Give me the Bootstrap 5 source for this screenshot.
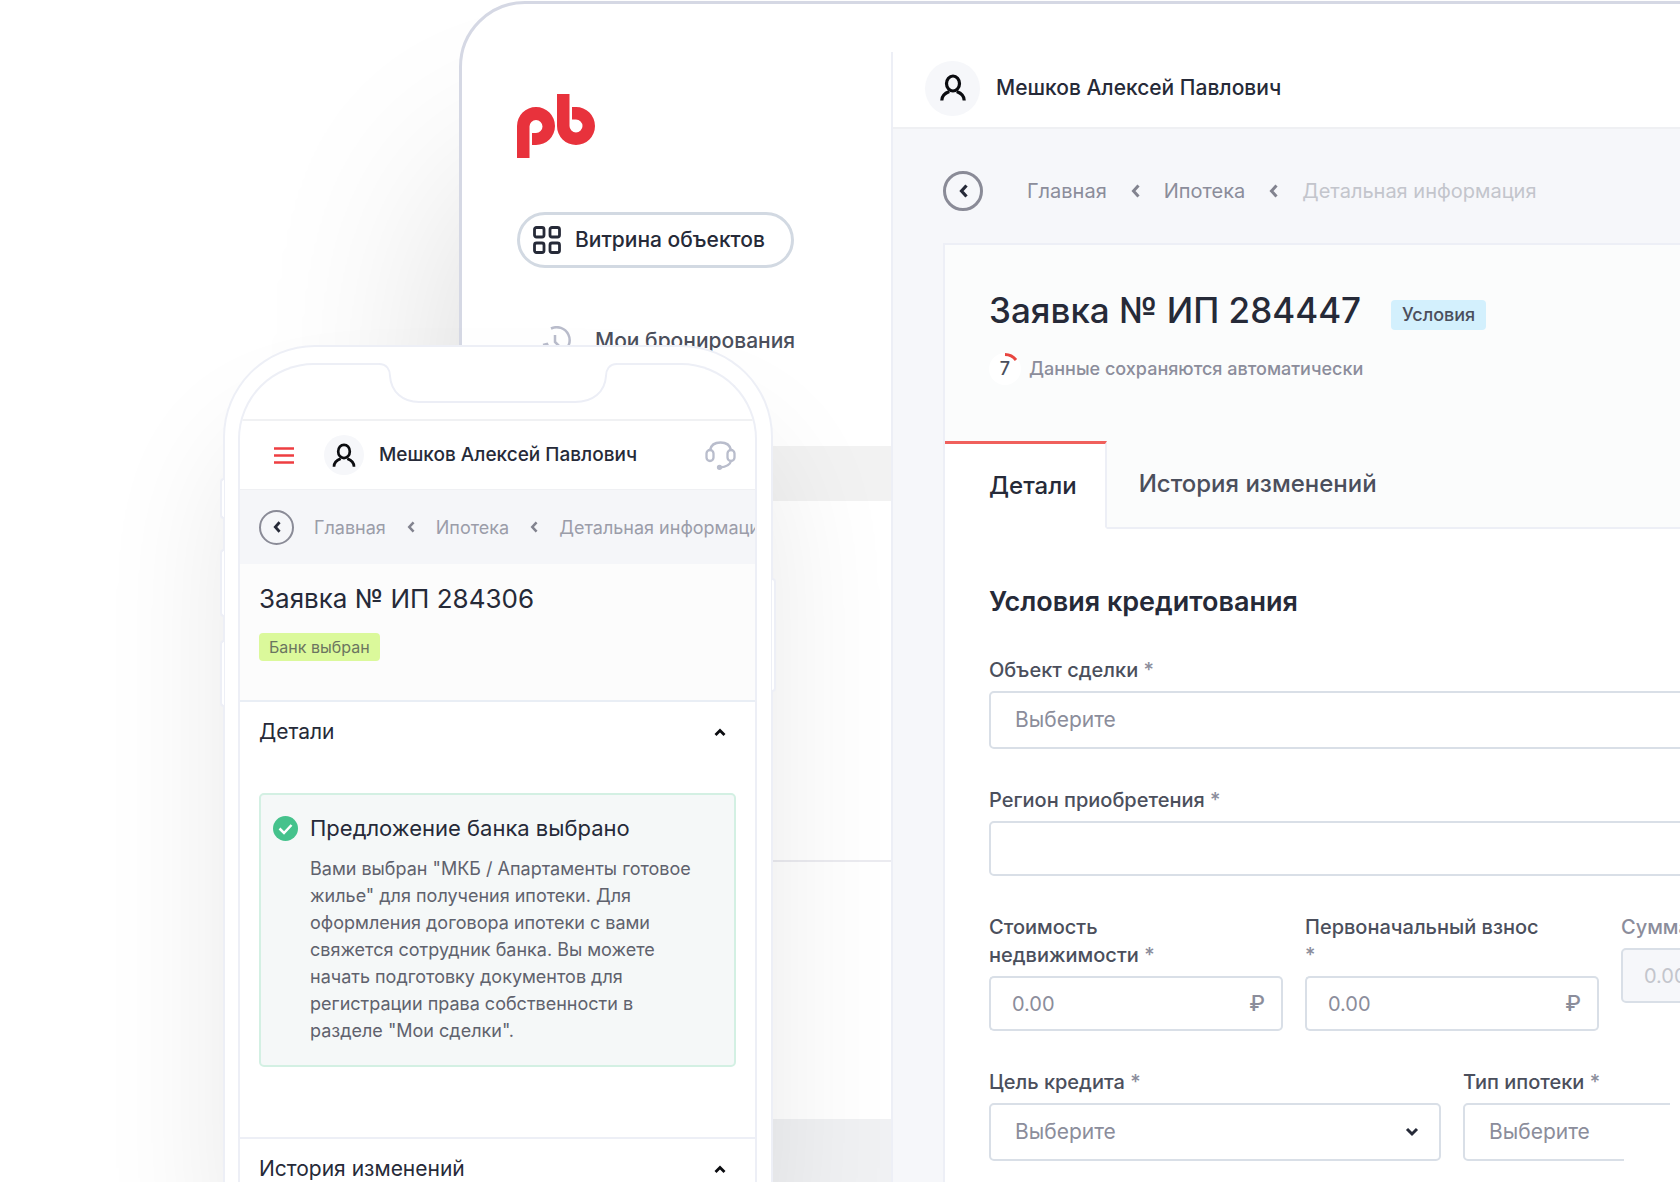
<!DOCTYPE html>
<html lang="ru">
<head>
<meta charset="utf-8">
<meta name="viewport" content="width=device-width, initial-scale=1">
<title>Заявка на ипотеку</title>
<link href="https://cdn.jsdelivr.net/npm/bootstrap@5.3.0/dist/css/bootstrap.min.css" rel="stylesheet">
<style>
  :root { --ink:#262a38; --ink-2:#4b4f5c; --dim:#8b8d9b; --faint:#c3c5cc; --line:#edeff6; --field:#d9dfe7; --page:#f6f7fa; --red:#e8323c; }
  body { font-family: Inter, "Open Sans", sans-serif; color: var(--ink); background: #fff; font-size: 21px; font-weight: 500; }
  a { text-decoration: none; color: inherit; }
  svg { display: block; flex: none; }
  .stage { height: 100vh; overflow: hidden; position: relative; }

  /* tablet */
  .tablet { margin: 1px -400px 0 459px; min-height: 1300px; border: 3px solid #d5d8e4; border-radius: 66px 0 0 0; background: #fff; padding-top: 48px; box-shadow: 0 180px 200px rgba(0,0,0,.16); }
  .side { width: 431px; flex: none; border-right: 2px solid var(--line); }
  .side-top { padding: 42px 0 0 55px; height: 394px; }
  .pill { height: 56px; margin-top: 54px; padding: 0 26px 0 13px; gap: 14px; border: 3px solid #d2d9e2; border-radius: 28px; color: var(--ink); font-size: 21px; font-weight: 500; background: #fff; }
  .side-link { margin-top: 57px; padding-left: 25px; color: var(--ink-2); }
  .band { height: 55px; background: #f2f2f2; }
  .side-mid { height: 361px; border-bottom: 2px solid #ebebf0; }
  .side-low { height: 257px; }
  .side-end { background: #f0f1f3; }
  .top-bar { height: 77px; padding: 0 0 3px 32px; border-bottom: 2px solid #eff0f3; }
  .face { width: 55px; height: 55px; border-radius: 50%; background: var(--page); }
  .work { background: var(--page); padding: 42px 0 0 50px; }
  .ring { width: 40px; height: 40px; border: 3px solid #8a8b97; border-radius: 50%; background: transparent; padding: 0; }
  .crumbs { gap: 24px; padding-left: 44px; font-size: 20px; font-weight: 400; color: var(--dim); white-space: nowrap; }
  .crumbs .now { color: var(--faint); }
  .order { margin: 32px 60px 0 0; width: 1018px; border: 2px solid var(--line); background: #fff; }
  .order-head { background: #fbfcfc; }
  .order-title { padding: 45px 0 0 44px; }
  .order h1 { font-size: 35px; line-height: 40px; font-weight: 500; margin: 0; }
  .tag { border-radius: 4px; background: #d3f0fd; color: var(--ink-2); font-size: 18px; line-height: 30px; padding: 0 11px; }
  .order-title .tag { margin-left: 30px; }
  .saved { margin-top: 23px; font-size: 18px; line-height: 32px; color: var(--dim); }
  .count { width: 32px; height: 32px; color: var(--ink-2); }
  .count svg { position: absolute; inset: 0; }
  .tabs-row { margin-top: 56px; font-size: 24px; }
  .tabs-row a { height: 88px; border-bottom: 2px solid var(--line); padding: 0 32px; color: var(--ink-2); }
  .tabs-row a.on { border-bottom-color: #fff; border-top: 3px solid #f0605c; border-right: 2px solid var(--line); background: #fff; color: var(--ink); padding: 0 28px 0 44px; }
  .tabs-row .rest { border-bottom: 2px solid var(--line); }
  .order-form { padding: 57px 44px 60px; }
  .order-form h2 { font-size: 27px; line-height: 32px; font-weight: 600; margin-bottom: 38px; }
  .fld { margin-bottom: 37px; }
  .fld label { display: block; font-size: 20px; line-height: 28px; margin-bottom: 7px; color: var(--ink-2); }
  .fld label span { color: var(--dim); }
  .fld .form-select, .fld .form-control { border: 2px solid var(--field); border-radius: 5px; box-shadow: none; font-size: 20px; color: var(--dim); height: 55px; font-weight: 400; }
  .fld .form-select { height: 58px; font-size: 21px; padding-left: 24px; background-image: url("data:image/svg+xml,%3Csvg xmlns='http://www.w3.org/2000/svg' viewBox='0 0 14 10'%3E%3Cpath d='M2 2l5 5 5-5' fill='none' stroke='%23262a38' stroke-width='3'/%3E%3C/svg%3E"); background-size: 14px 10px; background-position: right 20px center; }
  .fld .form-control { padding-left: 21px; }
  .fld .form-control::placeholder { color: var(--dim); }
  .fld .input-group .form-control { border-right: 0; }
  .fld .input-group-text { background: #fff; border: 2px solid var(--field); border-left: 0; border-radius: 5px; color: var(--dim); font-size: 22px; font-weight: 500; padding: 0 16px; }
  .fld.off label { color: var(--dim); }
  .fld.off .form-control { background: var(--page); }
  .fld.off .form-control::placeholder { color: var(--faint); }
  .fade-end { clip-path: polygon(0 0, 207px 0, 207px 50%, 161px 50%, 161px 100%, 0 100%); }
  .g-form { --bs-gutter-x: 22px; }

  /* phone */
  .phone { position: absolute; left: 223px; top: 345px; bottom: 0; width: 550px; border: 2px solid var(--line); border-bottom: 0; border-radius: 92px 92px 0 0; background: #fff; padding: 16px 14px 0 13px; box-shadow: 0 90px 130px rgba(0,0,0,.09); }
  .key { position: absolute; width: 4px; background: #fff; border: 2px solid var(--line); }
  .key.l { left: -5px; border-right: 0; border-radius: 4px 0 0 4px; }
  .key.r { right: -5px; border-left: 0; border-radius: 0 4px 4px 0; }
  .k1 { top: 131px; height: 41px; } .k2 { top: 202px; height: 68px; } .k3 { top: 293px; height: 67px; } .k4 { top: 231px; height: 114px; }
  .glass { height: 100%; border: 2px solid var(--line); border-bottom: 0; border-radius: 76px 76px 0 0; overflow: hidden; padding-top: 54px; }
  .notch { position: absolute; left: 50%; top: 15px; margin-left: -119px; }
  .m-bar { height: 71px; border-top: 2px solid #f0f1f3; border-bottom: 1px solid #eff0f3; padding: 0 19px 0 34px; font-size: 19px; }
  .m-bar button { border: 0; background: none; padding: 0; }
  .m-face { width: 40px; height: 40px; border-radius: 50%; background: var(--page); margin-left: 30px; margin-right: 15px; }
  .m-crumbs { height: 74px; background: #f5f6f9; padding-left: 19px; font-size: 18px; font-weight: 400; color: #9b9da9; white-space: nowrap; }
  .m-crumbs .ring { width: 35px; height: 35px; border-width: 2px; margin-right: 20px; }
  .m-path { gap: 21px; }
  .m-head { height: 138px; background: #fcfcfc; border-bottom: 2px solid #e9eef5; padding: 19px 19px 0; }
  .m-head h2 { font-size: 26px; line-height: 32px; font-weight: 400; margin: 0 0 18px; }
  .m-head .tag { display: inline-block; vertical-align: top; background: #dbf99b; color: #6b7560; font-size: 16px; line-height: 28px; padding: 0 10px; font-weight: 400; }
  .m-row { height: 60px; padding: 0 29px 0 19px; font-size: 21px; border: 0; background: none; width: 100%; color: var(--ink); font-weight: 400; }
  .m-note { margin: 31px 19px 70px; border: 2px solid #d3f0e3; border-radius: 5px; background: #f5f8f8; padding: 19px 18px 21px 12px; gap: 12px; }
  .m-note h3 { font-size: 22px; line-height: 28px; font-weight: 400; margin: 0 0 13px; }
  .m-note p { font-size: 18px; line-height: 27px; font-weight: 400; color: #5f626d; margin: 0; }
  .m-note svg { margin-top: 2px; }
  .m-sep { border-top: 2px solid var(--line); }
</style>
<script src="https://cdn.jsdelivr.net/npm/bootstrap@5.3.0/dist/js/bootstrap.bundle.min.js"></script>
</head>
<body>
<div class="stage">
  <div class="tablet d-flex">
    <aside class="side d-flex flex-column">
      <div class="side-top">
        <svg width="78" height="64" viewBox="0 0 78 64" fill="#e8323c" role="img" aria-label="pb"><path d="M0 64V32a19 19 0 1 1 19 19H15V39h4a6.500 6.500 0 1 0-6.500-6.500V64zM40 0h12.500v32a6.500 6.500 0 1 0 6.500-6.500h-4V13h4a19 19 0 1 1-19 19z"/></svg>
        <button type="button" class="pill d-inline-flex align-items-center">
          <svg width="28" height="28" viewBox="0 0 28 28" fill="none" stroke="#262a38" stroke-width="2.800"><rect x="1.500" y="1.500" width="9.500" height="9.500" rx="2"/><rect x="17" y="1.500" width="9.500" height="9.500" rx="2"/><rect x="1.500" y="17" width="9.500" height="9.500" rx="2"/><rect x="17" y="17" width="9.500" height="9.500" rx="2"/></svg>
          <span>Витрина объектов</span>
        </button>
        <a href="#" class="side-link d-flex align-items-center gap-4">
          <svg width="29" height="30" viewBox="0 0 29 30" fill="none" stroke="#b9bccb" stroke-width="2.500"><path d="M9 2.500A13 13 0 1 1 3 20M1 19l4-1 2 4M13 9v7l5 5"/></svg>
          <span>Мои бронирования</span>
        </a>
      </div>
      <div class="band"></div>
      <div class="side-mid"></div>
      <div class="side-low"></div>
      <div class="side-end flex-grow-1"></div>
    </aside>
    <main class="flex-grow-1 d-flex flex-column">
      <header class="top-bar d-flex align-items-center">
        <span class="face d-flex align-items-center justify-content-center me-3">
          <svg width="26" height="28" viewBox="0 0 26 28" fill="none" stroke="#0b0c10" stroke-width="3.200"><ellipse cx="13" cy="9.500" rx="6.500" ry="7.500"/><path d="M1.800 26.500c0-5 3.500-7.500 7.500-9M24.200 26.500c0-5-3.500-7.500-7.500-9"/></svg>
        </span>
        <span>Мешков Алексей Павлович</span>
      </header>
      <div class="work flex-grow-1">
        <nav class="d-flex align-items-center">
          <button type="button" class="ring d-flex align-items-center justify-content-center" aria-label="Назад"><svg width="9" height="14" viewBox="0 0 9 14" fill="none" stroke="#262a38" stroke-width="3.200"><path d="M7.500 1.500L2.500 7l5 5.500"/></svg></button>
          <div class="crumbs d-flex align-items-center">
            <a href="#">Главная</a>
            <svg width="9" height="14" viewBox="0 0 9 14" fill="none" stroke="#82838f" stroke-width="3"><path d="M7.500 1.500L2.500 7l5 5.500"/></svg>
            <a href="#">Ипотека</a>
            <svg width="9" height="14" viewBox="0 0 9 14" fill="none" stroke="#82838f" stroke-width="3"><path d="M7.500 1.500L2.500 7l5 5.500"/></svg>
            <span class="now">Детальная информация</span>
          </div>
        </nav>
        <section class="order">
          <div class="order-head">
            <div class="order-title">
              <div class="d-flex align-items-end">
                <h1>Заявка № ИП 284447</h1>
                <span class="tag">Условия</span>
              </div>
              <div class="saved d-flex align-items-center gap-2">
                <span class="count position-relative d-flex align-items-center justify-content-center"><svg width="32" height="32" viewBox="0 0 32 32" fill="none"><circle cx="16" cy="16" r="16" fill="#fff"/><path d="M16 1.500A14.500 14.500 0 0 1 27 7" stroke="#e8453f" stroke-width="3"/></svg><span class="position-relative">7</span></span>
                <span>Данные сохраняются автоматически</span>
              </div>
            </div>
            <div class="tabs-row d-flex">
              <a href="#" class="on d-flex align-items-center">Детали</a>
              <a href="#" class="d-flex align-items-center">История изменений</a>
              <div class="rest flex-grow-1"></div>
            </div>
          </div>
          <form class="order-form">
            <h2>Условия кредитования</h2>
            <div class="fld"><label for="obj">Объект сделки <span>*</span></label><select id="obj" class="form-select"><option>Выберите</option></select></div>
            <div class="fld"><label for="reg">Регион приобретения <span>*</span></label><input id="reg" type="text" class="form-control"></div>
            <div class="row g-form">
              <div class="col-4 fld"><label for="cost">Стоимость<br>недвижимости <span>*</span></label><div class="input-group"><input id="cost" type="text" class="form-control" placeholder="0.00"><span class="input-group-text">₽</span></div></div>
              <div class="col-4 fld"><label for="first">Первоначальный взнос<br><span>*</span></label><div class="input-group"><input id="first" type="text" class="form-control" placeholder="0.00"><span class="input-group-text">₽</span></div></div>
              <div class="col-4 fld off"><label for="sum">Сумма кредита</label><input id="sum" type="text" class="form-control" placeholder="0.00" disabled></div>
            </div>
            <div class="row g-form">
              <div class="col-6 fld"><label for="goal">Цель кредита <span>*</span></label><select id="goal" class="form-select"><option>Выберите</option></select></div>
              <div class="col-6 fld"><label for="kind">Тип ипотеки <span>*</span></label><select id="kind" class="form-select fade-end"><option>Выберите</option></select></div>
            </div>
          </form>
        </section>
      </div>
    </main>
  </div>

  <div class="phone">
    <span class="key l k1"></span><span class="key l k2"></span><span class="key l k3"></span><span class="key r k4"></span>
    <div class="glass">
      <header class="m-bar d-flex align-items-center">
        <button type="button" aria-label="Меню"><svg width="20" height="17" viewBox="0 0 20 17" stroke="#ee3e41" stroke-width="2.600"><path d="M0 1.500h20M0 8.500h20M0 15.500h20"/></svg></button>
        <span class="m-face d-flex align-items-center justify-content-center"><svg width="24" height="25" viewBox="0 0 26 28" fill="none" stroke="#0b0c10" stroke-width="3"><ellipse cx="13" cy="9.500" rx="6.500" ry="7.500"/><path d="M1.800 26.500c0-5 3.500-7.500 7.500-9M24.200 26.500c0-5-3.500-7.500-7.500-9"/></svg></span>
        <span class="flex-grow-1">Мешков Алексей Павлович</span>
        <svg width="31" height="29" viewBox="0 0 31 29" fill="none" stroke="#b9bdcc" stroke-width="2.300"><rect x="1.500" y="9" width="7" height="11" rx="3.500"/><rect x="22.500" y="9" width="7" height="11" rx="3.500"/><path d="M5 9C6 4 10 1.500 15.500 1.500S25 4 26 9M26 20c-1 4-5 6-11 6.500"/><circle cx="14.500" cy="26.300" r="1.500" fill="#b9bdcc"/></svg>
      </header>
      <nav class="m-crumbs d-flex align-items-center">
        <button type="button" class="ring d-flex align-items-center justify-content-center flex-shrink-0" aria-label="Назад"><svg width="8" height="12" viewBox="0 0 9 14" fill="none" stroke="#262a38" stroke-width="3.200"><path d="M7.500 1.500L2.500 7l5 5.500"/></svg></button>
        <div class="m-path d-flex align-items-center">
          <a href="#">Главная</a>
          <svg width="8" height="12" viewBox="0 0 9 14" fill="none" stroke="#82838f" stroke-width="3"><path d="M7.500 1.500L2.500 7l5 5.500"/></svg>
          <a href="#">Ипотека</a>
          <svg width="8" height="12" viewBox="0 0 9 14" fill="none" stroke="#82838f" stroke-width="3"><path d="M7.500 1.500L2.500 7l5 5.500"/></svg>
          <span>Детальная информация</span>
        </div>
      </nav>
      <div class="m-head">
        <h2>Заявка № ИП 284306</h2>
        <span class="tag">Банк выбран</span>
      </div>
      <button type="button" class="m-row d-flex align-items-center justify-content-between"><span>Детали</span><svg width="12" height="9" viewBox="0 0 12 9" fill="none" stroke="#0b0c10" stroke-width="2.800"><path d="M1.500 7L6 2.500 10.500 7"/></svg></button>
      <div class="m-note d-flex align-items-start">
        <svg width="25" height="25" viewBox="0 0 25 25"><circle cx="12.500" cy="12.500" r="12.500" fill="#45c28c"/><path d="M6.500 12.500l4.500 4.500 7.500-8" fill="none" stroke="#fff" stroke-width="2.500"/></svg>
        <div>
          <h3>Предложение банка выбрано</h3>
          <p>Вами выбран "МКБ / Апартаменты готовое<br>жилье" для получения ипотеки. Для<br>оформления договора ипотеки с вами<br>свяжется сотрудник банка. Вы можете<br>начать подготовку документов для<br>регистрации права собственности в<br>разделе "Мои сделки".</p>
        </div>
      </div>
      <div class="m-sep"><button type="button" class="m-row d-flex align-items-center justify-content-between"><span>История изменений</span><svg width="12" height="9" viewBox="0 0 12 9" fill="none" stroke="#0b0c10" stroke-width="2.800"><path d="M1.500 7L6 2.500 10.500 7"/></svg></button></div>
    </div>
    <svg class="notch" width="238" height="42" viewBox="0 0 238 42"><path d="M0 0H238V2C230 2 226 8 226 14C226 30 214 41 196 41H40C24 41 12 30 12 14C12 8 8 2 0 2z" fill="#fff"/><path d="M0 2C8 2 11 8 11 14C12 30 24 40 40 40H196C214 40 226 30 227 14C227 8 230 2 238 2" fill="none" stroke="#eceef6" stroke-width="2"/></svg>
  </div>
</div>
</body>
</html>
